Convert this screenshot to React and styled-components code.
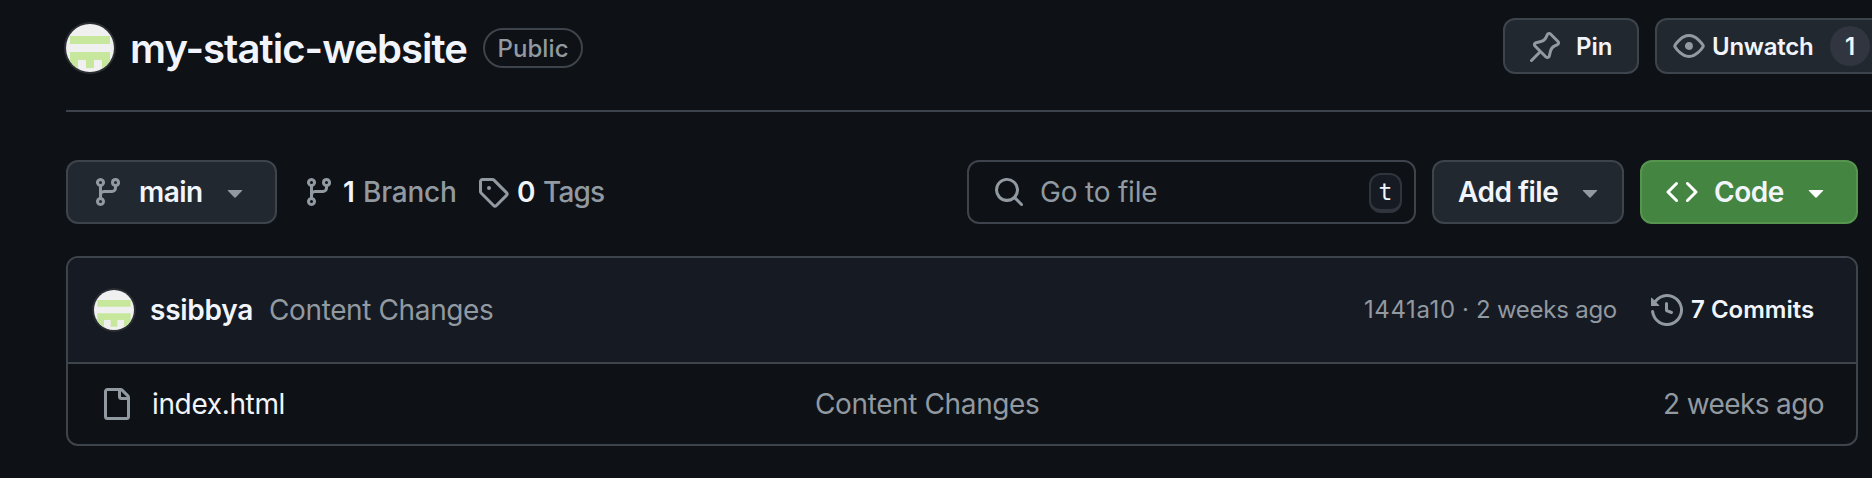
import React from "react";
import styled, { createGlobalStyle } from "styled-components";

const c = {
  bg: "#0e1116",
  panel: "#161a22",
  button: "#22282f",
  border: "#3e444b",
  muted: "#9199a1",
  text: "#f1f5fb",
  icon: "#9199a1",
};

const GlobalStyle = createGlobalStyle`
  *, *::before, *::after { box-sizing: border-box; }
  body {
    margin: 0;
    background: ${c.bg};
    color: ${c.text};
    font-family: Inter, "Liberation Sans", sans-serif;
    overflow: hidden;
  }
  button { font: inherit; margin: 0; color: inherit; }
`;

const paths = {
  branch:
    "M9.5 3.25a2.25 2.25 0 1 1 3 2.122V6A2.5 2.5 0 0 1 10 8.5H6a1 1 0 0 0-1 1v1.128a2.251 2.251 0 1 1-1.5 0V5.372a2.25 2.25 0 1 1 1.5 0v1.836A2.493 2.493 0 0 1 6 7h4a1 1 0 0 0 1-1v-.628A2.25 2.25 0 0 1 9.5 3.25Zm-6 0a.75.75 0 1 0 1.5 0 .75.75 0 0 0-1.5 0Zm8.25-.75a.75.75 0 1 0 0 1.5.75.75 0 0 0 0-1.5ZM4.25 12a.75.75 0 1 0 0 1.5.75.75 0 0 0 0-1.5Z",
  tag: "M1 7.775V2.75C1 1.784 1.784 1 2.75 1h5.025c.464 0 .91.184 1.238.513l6.25 6.25a1.75 1.75 0 0 1 0 2.474l-5.026 5.026a1.75 1.75 0 0 1-2.474 0l-6.25-6.25A1.752 1.752 0 0 1 1 7.775Zm1.5 0c0 .066.026.13.073.177l6.25 6.25a.25.25 0 0 0 .354 0l5.025-5.025a.25.25 0 0 0 0-.354l-6.25-6.25a.25.25 0 0 0-.177-.073H2.75a.25.25 0 0 0-.25.25ZM6 5a1 1 0 1 1 0 2 1 1 0 0 1 0-2Z",
  search:
    "M10.68 11.74a6 6 0 0 1-7.922-8.982 6 6 0 0 1 8.982 7.922l3.04 3.04a.749.749 0 0 1-.326 1.275.749.749 0 0 1-.734-.215ZM11.5 7a4.499 4.499 0 1 0-8.997 0A4.499 4.499 0 0 0 11.5 7Z",
  code: "m11.28 3.22 4.25 4.25a.75.75 0 0 1 0 1.06l-4.25 4.25a.749.749 0 0 1-1.275-.326.749.749 0 0 1 .215-.734L13.94 8l-3.72-3.72a.749.749 0 0 1 .326-1.275.749.749 0 0 1 .734.215Zm-6.56 0a.751.751 0 0 1 1.042.018.751.751 0 0 1 .018 1.042L2.06 8l3.72 3.72a.749.749 0 0 1-.326 1.275.749.749 0 0 1-.734-.215L.47 8.53a.75.75 0 0 1 0-1.06Z",
  history:
    "m.427 1.927 1.215 1.215a8.002 8.002 0 1 1-1.6 5.685.75.75 0 1 1 1.493-.154 6.5 6.5 0 1 0 1.18-4.458l1.358 1.358A.25.25 0 0 1 3.896 6H.25A.25.25 0 0 1 0 5.75V2.104a.25.25 0 0 1 .427-.177ZM7.75 4a.75.75 0 0 1 .75.75v2.992l2.028.812a.75.75 0 0 1-.557 1.392l-2.5-1A.751.751 0 0 1 7 8.25v-3.5A.75.75 0 0 1 7.75 4Z",
  file: "M2 1.75C2 .784 2.784 0 3.75 0h6.586c.464 0 .909.184 1.237.513l2.914 2.914c.329.328.513.773.513 1.237v9.586A1.75 1.75 0 0 1 13.25 16h-9.5A1.75 1.75 0 0 1 2 14.25Zm1.75-.25a.25.25 0 0 0-.25.25v12.5c0 .138.112.25.25.25h9.5a.25.25 0 0 0 .25-.25V6h-2.75A1.75 1.75 0 0 1 9 4.25V1.5Zm6.75.062V4.25c0 .138.112.25.25.25h2.688l-.011-.013-2.914-2.914-.013-.011Z",
  pin: "m11.294.984 3.722 3.722a1.75 1.75 0 0 1-.504 2.826l-1.327.613a3.089 3.089 0 0 0-1.707 2.084l-.584 2.454c-.317 1.332-1.972 1.8-2.94.832L5.75 11.311 1.78 15.28a.749.749 0 1 1-1.06-1.06l3.969-3.97-2.204-2.204c-.968-.968-.5-2.623.832-2.94l2.454-.584a3.08 3.08 0 0 0 2.084-1.707l.613-1.327a1.75 1.75 0 0 1 2.826-.504ZM6.283 9.723l2.732 2.731a.25.25 0 0 0 .42-.119l.584-2.454a4.586 4.586 0 0 1 2.537-3.098l1.328-.613a.25.25 0 0 0 .072-.404l-3.722-3.722a.25.25 0 0 0-.404.072l-.613 1.328a4.584 4.584 0 0 1-3.098 2.537l-2.454.584a.25.25 0 0 0-.119.42l2.731 2.732Z",
  eye: "M8 2c1.981 0 3.671.992 4.933 2.078 1.27 1.091 2.187 2.345 2.637 3.023a1.62 1.62 0 0 1 0 1.798c-.45.678-1.367 1.932-2.637 3.023C11.67 13.008 9.981 14 8 14c-1.981 0-3.671-.992-4.933-2.078C1.797 10.83.88 9.576.43 8.898a1.62 1.62 0 0 1 0-1.798c.45-.677 1.367-1.931 2.637-3.022C4.33 2.992 6.019 2 8 2ZM1.679 7.932a.12.12 0 0 0 0 .136c.411.622 1.241 1.75 2.366 2.717C5.176 11.758 6.527 12.5 8 12.5c1.473 0 2.825-.742 3.955-1.715 1.124-.967 1.954-2.096 2.366-2.717a.12.12 0 0 0 0-.136c-.412-.621-1.242-1.75-2.366-2.717C10.824 4.242 9.473 3.5 8 3.5c-1.473 0-2.825.742-3.955 1.715-1.124.967-1.954 2.096-2.366 2.717ZM8 10a2 2 0 1 1-.001-3.999A2 2 0 0 1 8 10Z",
  caret:
    "m4.427 7.427 3.396 3.396a.25.25 0 0 0 .354 0l3.396-3.396A.25.25 0 0 0 11.396 7H4.604a.25.25 0 0 0-.177.427Z",
};

const Svg = styled.svg`
  flex: none;
  display: block;
  width: 32px;
  height: 32px;
  fill: ${(p) => p.$color || c.icon};
`;

const Icon = ({ name, color }) => (
  <Svg viewBox="0 0 16 16" $color={color} aria-hidden="true">
    <path d={paths[name]} />
  </Svg>
);

const Page = styled.div`
  width: 1872px;
  height: 478px;
  padding-left: 66px;
  overflow: hidden;
`;

const Header = styled.header`
  display: flex;
  justify-content: space-between;
  height: 112px;
  padding-top: 18px;
  border-bottom: 2px solid ${c.border};
`;

const TitleGroup = styled.div`
  display: flex;
  align-items: center;
  height: 60px;
`;

const AvatarSvg = styled.svg`
  flex: none;
  display: block;
  width: ${(p) => p.$size}px;
  height: ${(p) => p.$size}px;
  border-radius: 50%;
  background: #f0f0f0;
  box-shadow: 0 0 0 2px #2b2e33;
`;

const Avatar = ({ size }) => (
  <AvatarSvg $size={size} viewBox="0 0 48 48" aria-hidden="true">
    <path
      fill="#c6e79c"
      d="M4 12h40v8H4zM4 28h40v16h-8v-8h-8v8h-8v-8h-8v8H4z"
    />
  </AvatarSvg>
);

const Label = styled.span`
  display: block;
  flex: none;
  width: ${(p) => (p.$w ? `${p.$w}px` : "auto")};
  margin-left: ${(p) => p.$ml || 0}px;
  padding-top: ${(p) => p.$drop || 0}px;
  font-size: ${(p) => p.$size || 28}px;
  font-weight: ${(p) => p.$weight || 400};
  letter-spacing: ${(p) => p.$track || 0}px;
  line-height: 40px;
  text-align: left;
  color: ${(p) => (p.$muted ? c.muted : c.text)};
  white-space: nowrap;
`;

const Title = styled.h1`
  margin: 0 0 0 16px;
  padding-top: 2px;
  width: 353px;
  font-size: 40px;
  font-weight: 600;
  line-height: 48px;
  letter-spacing: -0.95px;
  white-space: nowrap;
`;

const Badge = styled.span`
  display: flex;
  align-items: center;
  justify-content: center;
  width: 100px;
  height: 40px;
  border: 2px solid ${c.border};
  border-radius: 20px;
`;

const Actions = styled.div`
  display: flex;
  gap: 16px;
  width: 369px;
`;

const Button = styled.button`
  display: flex;
  align-items: center;
  flex: none;
  width: ${(p) => p.$w}px;
  height: ${(p) => p.$h || 64}px;
  padding: 0 0 0 ${(p) => p.$pad}px;
  gap: ${(p) => p.$gap || 0}px;
  border: 2px solid ${(p) => (p.$primary ? "#56954f" : c.border)};
  border-radius: 12px;
  background: ${(p) => (p.$primary ? "#448541" : c.button)};
`;

const PinIcon = styled.span`
  padding-top: 2px;
`;

const Counter = styled.span`
  display: flex;
  align-items: center;
  justify-content: center;
  width: 40px;
  height: 40px;
  margin-left: 7px;
  border-radius: 50%;
  background: #30353f;
`;

const Toolbar = styled.nav`
  display: flex;
  align-items: center;
  width: 1792px;
  margin-top: 48px;
`;

const Stat = styled.div`
  display: flex;
  align-items: center;
  width: ${(p) => p.$w}px;
  margin-left: ${(p) => p.$ml}px;
`;

const Search = styled.div`
  display: flex;
  align-items: center;
  width: 449px;
  height: 64px;
  margin-left: auto;
  padding: 0 12px 0 24px;
  border: 2px solid ${c.border};
  border-radius: 12px;
`;

const Key = styled.kbd`
  display: flex;
  justify-content: center;
  width: 33px;
  height: 40px;
  margin: 2px 0 0 auto;
  border: 2px solid #30353d;
  border-bottom-width: 4px;
  border-radius: 12px;
  background: #161a22;
  font: 23px/34px "DejaVu Sans Mono", monospace;
`;

const FileButtons = styled.div`
  display: flex;
  gap: 16px;
  margin-left: 16px;
`;

const Table = styled.section`
  width: 1792px;
  height: 190px;
  margin-top: 32px;
  border: 2px solid ${c.border};
  border-radius: 12px;
  overflow: hidden;
`;

const CommitRow = styled.div`
  display: flex;
  align-items: center;
  height: 106px;
  padding-left: 26px;
  background: ${c.panel};
  border-bottom: 2px solid ${c.border};
`;

const CommitMeta = styled.div`
  display: flex;
  align-items: center;
  margin-left: auto;
  width: 492px;
`;

const FileRow = styled.div`
  display: grid;
  grid-template-columns: 52px 663px 848px 1fr;
  align-items: center;
  height: 80px;
  padding-left: 32px;
`;

export default function App() {
  return (
    <>
      <GlobalStyle />
      <Page>
        <Header>
          <TitleGroup>
            <Avatar size={48} />
            <Title>my-static-website</Title>
            <Badge>
              <Label $size={24} $weight={500} $drop={1} $track={0.1} $muted>Public</Label>
            </Badge>
          </TitleGroup>
          <Actions>
            <Button $w={136} $h={56} $pad={24} $gap={15}>
              <PinIcon><Icon name="pin" /></PinIcon>
              <Label $size={24} $weight={600} $drop={2}>Pin</Label>
            </Button>
            <Button $w={280} $h={56} $pad={16} $gap={7}>
              <Icon name="eye" />
              <Label $size={24} $weight={600} $w={104} $drop={2} $track={-0.25}>Unwatch</Label>
              <Counter><Label $size={24} $weight={600} $drop={1}>1</Label></Counter>
            </Button>
          </Actions>
        </Header>

        <Toolbar>
          <Button $w={211} $pad={24} $gap={15}>
            <Icon name="branch" />
            <Label $weight={600} $w={65} $track={-0.55}>main</Label>
            <Icon name="caret" />
          </Button>
          <Stat $ml={26} $w={174}>
            <Icon name="branch" />
            <Label $weight={600} $ml={8} $w={20}>1</Label>
            <Label $weight={500} $track={-0.2} $muted>Branch</Label>
          </Stat>
          <Stat $ml={0} $w={130}>
            <Icon name="tag" />
            <Label $weight={600} $ml={8} $w={26}>0</Label>
            <Label $weight={500} $track={-0.8} $muted>Tags</Label>
          </Stat>
          <Search>
            <Icon name="search" />
            <Label $ml={15} $track={-0.2} $muted>Go to file</Label>
            <Key>t</Key>
          </Search>
          <FileButtons>
            <Button $w={192} $pad={24}>
              <Label $weight={600} $w={116} $track={-0.5}>Add file</Label>
              <Icon name="caret" />
            </Button>
            <Button $w={218} $pad={24} $gap={16} $primary>
              <Icon name="code" color="#fff" />
              <Label $weight={600} $w={70} $track={-0.5}>Code</Label>
              <Icon name="caret" color="#fff" />
            </Button>
          </FileButtons>
        </Toolbar>

        <Table>
          <CommitRow>
            <Avatar size={40} />
            <Label $weight={600} $ml={16} $w={119} $track={-0.25}>ssibbya</Label>
            <Label $track={-0.38} $muted>Content Changes</Label>
            <CommitMeta>
              <Label $size={24} $w={96} $track={0.6} $muted>1441a10</Label>
              <Label $size={24} $w={14} $ml={2} $muted>·</Label>
              <Label $size={24} $w={175} $track={-0.25} $muted>2 weeks ago</Label>
              <Icon name="history" />
              <Label $size={24} $weight={600} $ml={8}>7 Commits</Label>
            </CommitMeta>
          </CommitRow>
          <FileRow>
            <Icon name="file" />
            <Label $track={-0.35}>index.html</Label>
            <Label $track={-0.38} $muted>Content Changes</Label>
            <Label $track={-0.62} $muted>2 weeks ago</Label>
          </FileRow>
        </Table>
      </Page>
    </>
  );
}
